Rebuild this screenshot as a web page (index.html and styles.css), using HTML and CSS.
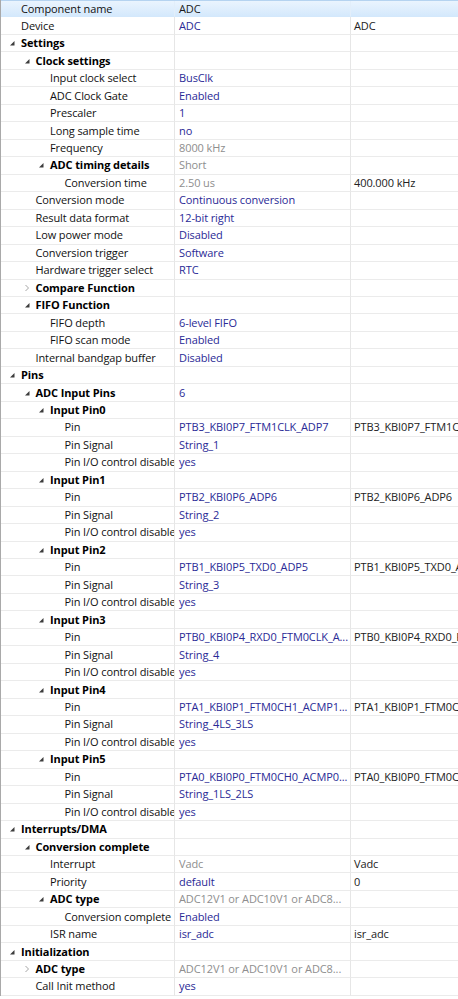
FILE: index.html
```html
<!DOCTYPE html>
<html>
<head>
<meta charset="utf-8">
<link rel="stylesheet" href="styles.css">
</head>
<body>
<div class="tree" id="tree"></div>
<script src="app.js"></script>
</body>
</html>
```
FILE: styles.css
```css
html, body {
  margin: 0;
  padding: 0;
  background: #ffffff;
}
body {
  font-family: "Open Sans", "Noto Sans", "DejaVu Sans", sans-serif;
  font-size: 11px;
  letter-spacing: -0.1px;
  color: #1a1a1a;
}
.tree {
  border-left: 1px solid #a9a9a9;
  width: 457px;
  overflow: hidden;
}
.row {
  display: grid;
  grid-template-columns: 174px 176px 1fr;
  height: 17.47px;
  box-sizing: border-box;
}
.row.selected {
  background: linear-gradient(#eaf4fe, #d3e8fc);
  border-top: 1px solid #b5d3f0;
}
.cell {
  border-right: 1px solid #e6e6e6;
  border-bottom: 1px solid #ebebeb;
  box-sizing: border-box;
  white-space: nowrap;
  overflow: hidden;
  display: flex;
  align-items: center;
  line-height: 16px;
}
.row.selected .cell {
  border-bottom-color: #d3e8fc;
  border-right-color: #e2eefa;
}
.name {
  position: relative;
  color: #111;
}
.name.group {
  font-weight: 700;
  color: #000;
}
.val {
  padding-left: 4px;
}
.third {
  padding-left: 3px;
  border-right: none;
  color: #222;
}
.v-blue { color: #2a2a96; }
.v-grey { color: #8e8e8e; }
.v-black { color: #1a1a1a; }
.exp {
  position: absolute;
  top: 50%;
  width: 8px;
  height: 8px;
  margin-top: -4px;
}
```
FILE: app.js
```js
var rows = [
  [0,"Component name","", "ADC","black","", "sel"],
  [0,"Device","", "ADC","blue","ADC"],
  [0,"Settings","e"],
  [1,"Clock settings","e"],
  [2,"Input clock select","", "BusClk","blue"],
  [2,"ADC Clock Gate","", "Enabled","blue"],
  [2,"Prescaler","", "1","blue"],
  [2,"Long sample time","", "no","blue"],
  [2,"Frequency","", "8000 kHz","grey"],
  [2,"ADC timing details","e", "Short","grey"],
  [3,"Conversion time","", "2.50 us","grey","400.000 kHz"],
  [1,"Conversion mode","", "Continuous conversion","blue"],
  [1,"Result data format","", "12-bit right","blue"],
  [1,"Low power mode","", "Disabled","blue"],
  [1,"Conversion trigger","", "Software","blue"],
  [1,"Hardware trigger select","", "RTC","blue"],
  [1,"Compare Function","c"],
  [1,"FIFO Function","e"],
  [2,"FIFO depth","", "6-level FIFO","blue"],
  [2,"FIFO scan mode","", "Enabled","blue"],
  [1,"Internal bandgap buffer","", "Disabled","blue"],
  [0,"Pins","e"],
  [1,"ADC Input Pins","e", "6","blue"],
  [2,"Input Pin0","e"],
  [3,"Pin","", "PTB3_KBI0P7_FTM1CLK_ADP7","blue","PTB3_KBI0P7_FTM1CLK_ADP7"],
  [3,"Pin Signal","", "String_1","blue"],
  [3,"Pin I/O control disable","", "yes","blue"],
  [2,"Input Pin1","e"],
  [3,"Pin","", "PTB2_KBI0P6_ADP6","blue","PTB2_KBI0P6_ADP6"],
  [3,"Pin Signal","", "String_2","blue"],
  [3,"Pin I/O control disable","", "yes","blue"],
  [2,"Input Pin2","e"],
  [3,"Pin","", "PTB1_KBI0P5_TXD0_ADP5","blue","PTB1_KBI0P5_TXD0_ADP5"],
  [3,"Pin Signal","", "String_3","blue"],
  [3,"Pin I/O control disable","", "yes","blue"],
  [2,"Input Pin3","e"],
  [3,"Pin","", "PTB0_KBI0P4_RXD0_FTM0CLK_A...","blue","PTB0_KBI0P4_RXD0_FTM0CLK_ADP4"],
  [3,"Pin Signal","", "String_4","blue"],
  [3,"Pin I/O control disable","", "yes","blue"],
  [2,"Input Pin4","e"],
  [3,"Pin","", "PTA1_KBI0P1_FTM0CH1_ACMP1...","blue","PTA1_KBI0P1_FTM0CH1_ACMP1_ADP1"],
  [3,"Pin Signal","", "String_4LS_3LS","blue"],
  [3,"Pin I/O control disable","", "yes","blue"],
  [2,"Input Pin5","e"],
  [3,"Pin","", "PTA0_KBI0P0_FTM0CH0_ACMP0...","blue","PTA0_KBI0P0_FTM0CH0_ACMP0_ADP0"],
  [3,"Pin Signal","", "String_1LS_2LS","blue"],
  [3,"Pin I/O control disable","", "yes","blue"],
  [0,"Interrupts/DMA","e"],
  [1,"Conversion complete","e"],
  [2,"Interrupt","", "Vadc","grey","Vadc"],
  [2,"Priority","", "default","blue","0"],
  [2,"ADC type","e", "ADC12V1 or ADC10V1 or ADC8...","grey"],
  [3,"Conversion complete","", "Enabled","blue"],
  [2,"ISR name","", "isr_adc","blue","isr_adc"],
  [0,"Initialization","e"],
  [1,"ADC type","c", "ADC12V1 or ADC10V1 or ADC8...","grey"],
  [1,"Call Init method","", "yes","blue"]
];

var EXP = '<svg class="exp" viewBox="0 0 8 8"><path d="M6.5 2 L6.5 6.5 L2 6.5 Z" fill="#3c3c3c"/></svg>';
var COL = '<svg class="exp" viewBox="0 0 8 8"><path d="M2.5 1 L5.5 4 L2.5 7" fill="none" stroke="#a6a6a6" stroke-width="1"/></svg>';

var tree = document.getElementById('tree');
rows.forEach(function (r) {
  var level = r[0], name = r[1], ex = r[2] || '', val = r[3] || '', vc = r[4] || 'blue', third = r[5] || '', sel = r[6];
  var row = document.createElement('div');
  row.className = 'row' + (sel ? ' selected' : '');
  var nameCell = document.createElement('div');
  nameCell.className = 'cell name' + (ex ? ' group' : '');
  nameCell.style.paddingLeft = (20 + 14.5 * level) + 'px';
  var icon = '';
  if (ex) {
    icon = (ex === 'e' ? EXP : COL).replace('class="exp"', 'class="exp" style="left:' + (7 + 14.5 * level) + 'px"');
  }
  nameCell.innerHTML = icon + '<span></span>';
  nameCell.lastChild.textContent = name;
  var v = document.createElement('div');
  v.className = 'cell val v-' + vc;
  v.textContent = val;
  var t = document.createElement('div');
  t.className = 'cell third';
  t.textContent = third;
  row.appendChild(nameCell);
  row.appendChild(v);
  row.appendChild(t);
  tree.appendChild(row);
});
```
